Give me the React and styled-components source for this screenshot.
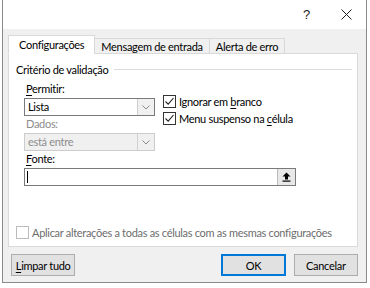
import React from "react";
import styled, { createGlobalStyle } from "styled-components";

const Global = createGlobalStyle`
  html, body { margin: 0; padding: 0; background: #ffffff; }
  body {
    font-family: "Lato", "Liberation Sans", sans-serif;
    font-size: 11px;
    letter-spacing: -0.3px;
    color: #000;
  }
`;

const Window = styled.div`
  margin-left: 2px;
  width: 363px;
  height: 282px;
  border: 1px solid #8a8a8a;
  border-top: none;
  display: flex;
  flex-direction: column;
  background: #f0f0f0;
`;

const TitleBar = styled.div`
  height: 30px;
  background: #ffffff;
  display: flex;
  align-items: center;
  justify-content: flex-end;
  padding-right: 14px;
  gap: 31px;
`;

const Help = styled.span`
  font-size: 13px;
  font-family: "Liberation Sans", sans-serif;
  color: #222;
`;

const CloseIcon = () => (
  <svg width="11" height="11" viewBox="0 0 11 11">
    <path d="M0.5 0.5 L10.5 10.5 M10.5 0.5 L0.5 10.5" stroke="#222" strokeWidth="1" fill="none" />
  </svg>
);

const Body = styled.div`
  flex: 1;
  display: flex;
  flex-direction: column;
  padding: 6px 8px 6px 5px;
`;

const TabRow = styled.div`
  display: flex;
  align-items: flex-end;
  height: 19px;
  position: relative;
  z-index: 1;
  margin-bottom: -1px;
`;

const Tab = styled.div`
  flex: none;
  height: ${(p) => (p.$active ? "19px" : "16px")};
  padding: 0 ${(p) => (p.$active ? "10px" : "6px")};
  display: flex;
  align-items: center;
  box-sizing: border-box;
  white-space: nowrap;
  background: ${(p) => (p.$active ? "#ffffff" : "#f0f0f0")};
  border: 1px solid #d9d9d9;
  border-bottom: ${(p) => (p.$active ? "1px solid #ffffff" : "1px solid #d9d9d9")};
  margin-left: ${(p) => (p.$active ? "0" : "-1px")};
  padding-top: ${(p) => (p.$active ? "0" : "1px")};
`;

const Panel = styled.div`
  height: 194px;
  box-sizing: border-box;
  background: #ffffff;
  border: 1px solid #d9d9d9;
  padding: 8px 5px 0 7px;
  display: flex;
  flex-direction: column;
`;

const GroupHeader = styled.div`
  display: flex;
  align-items: center;
  gap: 6px;
  height: 15px;
`;

const Rule = styled.div`
  flex: 1;
  height: 0;
  border-top: 1px solid #dcdcdc;
`;

const Columns = styled.div`
  display: flex;
  margin-top: 2px;
  padding-left: 8px;
`;

const LeftCol = styled.div`
  width: 131px;
  display: flex;
  flex-direction: column;
`;

const RightCol = styled.div`
  display: flex;
  flex-direction: column;
  gap: 4px;
  margin-left: 8px;
  padding-top: 16px;
`;

const Label = styled.div`
  height: 15px;
  line-height: 15px;
  white-space: nowrap;
  color: ${(p) => (p.$disabled ? "#8d8d8d" : "#000")};
  margin-top: ${(p) => p.$mt || 0}px;
  margin-bottom: 2px;
  padding-left: 2px;
  u { text-decoration: underline; text-underline-offset: 2px; }
`;

const Combo = styled.div`
  height: 18px;
  box-sizing: border-box;
  display: flex;
  border: 1px solid ${(p) => (p.$disabled ? "#cccccc" : "#7a7a7a")};
  background: ${(p) => (p.$disabled ? "#f0f0f0" : "#ffffff")};
  color: ${(p) => (p.$disabled ? "#8d8d8d" : "#000")};
`;

const ComboText = styled.div`
  flex: 1;
  padding-left: 3px;
  line-height: 16px;
`;

const ComboButton = styled.div`
  width: 16px;
  display: flex;
  align-items: center;
  justify-content: center;
  background: #f0f0f0;
  border-left: 1px solid #d0d0d0;
`;

const Chevron = () => (
  <svg width="8" height="5" viewBox="0 0 8 5">
    <path d="M0.5 0.5 L4 4 L7.5 0.5" stroke="#8a8a8a" strokeWidth="1" fill="none" />
  </svg>
);

const CheckRow = styled.div`
  display: flex;
  align-items: center;
  gap: 3px;
  height: 13px;
  white-space: nowrap;
  color: ${(p) => (p.$disabled ? "#6d6d6d" : "#000")};
  u { text-decoration: underline; text-underline-offset: 2px; }
`;

const Box = styled.div`
  width: 13px;
  height: 13px;
  flex: none;
  box-sizing: border-box;
  border: 1px solid ${(p) => (p.$disabled ? "#bcbcbc" : "#333333")};
  background: #ffffff;
  display: flex;
  align-items: center;
  justify-content: center;
`;

const Tick = () => (
  <svg width="11" height="11" viewBox="0 0 11 11">
    <path d="M1.5 5.5 L4.2 8.2 L9.5 2" stroke="#222" strokeWidth="1.1" fill="none" />
  </svg>
);

const SourceBlock = styled.div`
  padding-left: 8px;
  display: flex;
  flex-direction: column;
`;

const InputRow = styled.div`
  width: 272px;
  height: 18px;
  box-sizing: border-box;
  border: 1px solid #7a7a7a;
  display: flex;
  background: #ffffff;
`;

const InputField = styled.div`
  flex: 1;
  display: flex;
  align-items: center;
  padding-left: 2px;
`;

const Caret = styled.div`
  width: 1px;
  height: 12px;
  background: #000;
`;

const PickButton = styled.div`
  width: 17px;
  display: flex;
  align-items: center;
  justify-content: center;
  background: #e8e8e8;
  border-left: 1px solid #bcbcbc;
`;

const PickIcon = () => (
  <svg width="9" height="10" viewBox="0 0 9 10">
    <path d="M4.5 0.5 L8.5 4.5 L6 4.5 L6 7.5 L3 7.5 L3 4.5 L0.5 4.5 Z" fill="#000" />
    <rect x="0.5" y="8.5" width="8" height="1.2" fill="#000" />
  </svg>
);

const Spacer = styled.div`
  flex: 1;
`;

const ApplyRow = styled.div`
  margin-bottom: 7px;
`;

const ButtonRow = styled.div`
  display: flex;
  align-items: center;
  margin-top: 7px;
  padding-left: 3px;
`;

const Button = styled.div`
  width: ${(p) => p.$w || 66}px;
  height: 22px;
  box-sizing: border-box;
  white-space: nowrap;
  background: #e1e1e1;
  border: 1px solid ${(p) => (p.$primary ? "#0078d7" : "#adadad")};
  box-shadow: ${(p) => (p.$primary ? "inset 0 0 0 1px #0078d7" : "none")};
  display: flex;
  align-items: center;
  justify-content: center;
  margin-left: ${(p) => p.$ml || 0}px;
  u { text-decoration: underline; text-underline-offset: 2px; }
`;

export default function App() {
  return (
    <>
      <Global />
      <Window>
        <TitleBar>
          <Help>?</Help>
          <CloseIcon />
        </TitleBar>
        <Body>
          <TabRow>
            <Tab $active>Configurações</Tab>
            <Tab>Mensagem de entrada</Tab>
            <Tab>Alerta de erro</Tab>
          </TabRow>
          <Panel>
            <GroupHeader>
              <span>Critério de validação</span>
              <Rule />
            </GroupHeader>
            <Columns>
              <LeftCol>
                <Label $mt={2}><u>P</u>ermitir:</Label>
                <Combo>
                  <ComboText>Lista</ComboText>
                  <ComboButton><Chevron /></ComboButton>
                </Combo>
                <Label $disabled $mt={0}>Dados:</Label>
                <Combo $disabled>
                  <ComboText>está entre</ComboText>
                  <ComboButton><Chevron /></ComboButton>
                </Combo>
              </LeftCol>
              <RightCol>
                <CheckRow>
                  <Box><Tick /></Box>
                  <span>Ignorar em <u>b</u>ranco</span>
                </CheckRow>
                <CheckRow>
                  <Box><Tick /></Box>
                  <span>Menu suspenso na <u>c</u>élula</span>
                </CheckRow>
              </RightCol>
            </Columns>
            <SourceBlock>
              <Label $mt={0}><u>F</u>onte:</Label>
              <InputRow>
                <InputField><Caret /></InputField>
                <PickButton><PickIcon /></PickButton>
              </InputRow>
            </SourceBlock>
            <Spacer />
            <ApplyRow>
              <CheckRow $disabled>
                <Box $disabled />
                <span>Aplicar alterações a todas as células com as mesmas configurações</span>
              </CheckRow>
            </ApplyRow>
          </Panel>
          <ButtonRow>
            <Button><span><u>L</u>impar tudo</span></Button>
            <Button $primary $ml={146}>OK</Button>
            <Button $ml={8}>Cancelar</Button>
          </ButtonRow>
        </Body>
      </Window>
    </>
  );
}
